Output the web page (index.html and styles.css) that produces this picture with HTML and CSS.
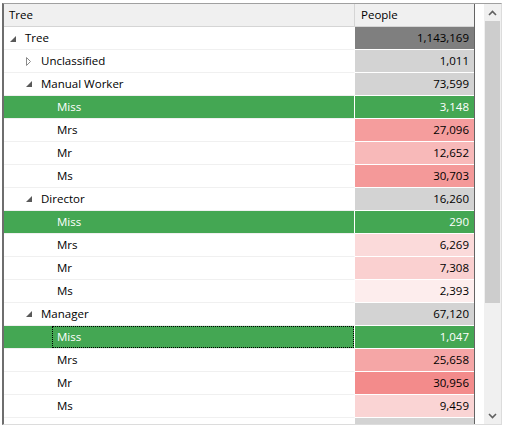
FILE: index.html
```html
<!DOCTYPE html>
<html>
<head>
<meta charset="utf-8">
<link rel="stylesheet" href="styles.css">
</head>
<body>
<div class="frame">
  <div class="grid">
    <div class="header">
      <div class="h-tree">Tree</div>
      <div class="h-val">People</div>
    </div>
    <div class="body">
      <div class="row"><div class="tc l0"><span class="tg"><svg width="6" height="6" viewBox="0 0 6 6"><path d="M0 6 L6 0 L6 6 Z" fill="#595959"/></svg></span><span class="lb">Tree</span></div><div class="vc c-root">1,143,169</div></div>
      <div class="row"><div class="tc l1"><span class="tg"><svg width="5" height="9" viewBox="0 0 5 9"><path d="M0.5 0.5 L4.5 4.5 L0.5 8.5 Z" fill="none" stroke="#8a8a8a"/></svg></span><span class="lb">Unclassified</span></div><div class="vc c-grp">1,011</div></div>
      <div class="row"><div class="tc l1"><span class="tg"><svg width="6" height="6" viewBox="0 0 6 6"><path d="M0 6 L6 0 L6 6 Z" fill="#595959"/></svg></span><span class="lb">Manual Worker</span></div><div class="vc c-grp">73,599</div></div>
      <div class="row sel"><div class="tc l2"><span class="tg"></span><span class="lb">Miss</span></div><div class="vc c-sel">3,148</div></div>
      <div class="row"><div class="tc l2"><span class="tg"></span><span class="lb">Mrs</span></div><div class="vc r-mw-mrs">27,096</div></div>
      <div class="row"><div class="tc l2"><span class="tg"></span><span class="lb">Mr</span></div><div class="vc r-mw-mr">12,652</div></div>
      <div class="row"><div class="tc l2"><span class="tg"></span><span class="lb">Ms</span></div><div class="vc r-mw-ms">30,703</div></div>
      <div class="row"><div class="tc l1"><span class="tg"><svg width="6" height="6" viewBox="0 0 6 6"><path d="M0 6 L6 0 L6 6 Z" fill="#595959"/></svg></span><span class="lb">Director</span></div><div class="vc c-grp">16,260</div></div>
      <div class="row sel"><div class="tc l2"><span class="tg"></span><span class="lb">Miss</span></div><div class="vc c-sel">290</div></div>
      <div class="row"><div class="tc l2"><span class="tg"></span><span class="lb">Mrs</span></div><div class="vc r-d-mrs">6,269</div></div>
      <div class="row"><div class="tc l2"><span class="tg"></span><span class="lb">Mr</span></div><div class="vc r-d-mr">7,308</div></div>
      <div class="row"><div class="tc l2"><span class="tg"></span><span class="lb">Ms</span></div><div class="vc r-d-ms">2,393</div></div>
      <div class="row"><div class="tc l1"><span class="tg"><svg width="6" height="6" viewBox="0 0 6 6"><path d="M0 6 L6 0 L6 6 Z" fill="#595959"/></svg></span><span class="lb">Manager</span></div><div class="vc c-grp">67,120</div></div>
      <div class="row sel"><div class="tc l2"><span class="tg"></span><span class="lb focus">Miss</span></div><div class="vc c-sel">1,047</div></div>
      <div class="row"><div class="tc l2"><span class="tg"></span><span class="lb">Mrs</span></div><div class="vc r-m-mrs">25,658</div></div>
      <div class="row"><div class="tc l2"><span class="tg"></span><span class="lb">Mr</span></div><div class="vc r-m-mr">30,956</div></div>
      <div class="row"><div class="tc l2"><span class="tg"></span><span class="lb">Ms</span></div><div class="vc r-m-ms">9,459</div></div>
      <div class="row"><div class="tc l1"><span class="tg"></span><span class="lb"></span></div><div class="vc c-grp"></div></div>
    </div>
  </div>
  <div class="gap"></div>
  <div class="scroll">
    <div class="sbtn"><svg width="9" height="6" viewBox="0 0 9 6"><path d="M1 5 L4.5 1.5 L8 5" fill="none" stroke="#606060" stroke-width="1.6"/></svg></div>
    <div class="thumb"></div>
    <div class="track"></div>
    <div class="sbtn"><svg width="9" height="6" viewBox="0 0 9 6"><path d="M1 1 L4.5 4.5 L8 1" fill="none" stroke="#606060" stroke-width="1.6"/></svg></div>
  </div>
</div>
</body>
</html>
```
FILE: styles.css
```css
html, body {
  margin: 0;
  padding: 0;
  background: #ffffff;
}
body {
  font-family: "Open Sans", "Noto Sans", sans-serif;
  font-size: 11.5px;
  color: #000;
}
.frame {
  margin: 3px 0 0 2px;
  width: 497px;
  height: 420px;
  display: flex;
  border-top: 1px solid #a0a0a0;
  border-left: 2px solid #6e6e6e;
  border-right: 1px solid #dcdcdc;
  border-bottom: 1px solid #dcdcdc;
}
.grid {
  width: 470px;
  border-right: 1px solid #646464;
  display: flex;
  flex-direction: column;
  overflow: hidden;
}
.header {
  display: flex;
  height: 22px;
  line-height: 22px;
  background: #f0f0f0;
  border-bottom: 1px solid #d5d5d5;
  flex: none;
}
.h-tree {
  width: 345px;
  padding-left: 5px;
  border-right: 1px solid #d5d5d5;
}
.h-val {
  flex: 1;
  padding-left: 6px;
}
.body {
  flex: 1;
  overflow: hidden;
}
.row {
  display: flex;
  height: 23px;
}
.tc {
  display: flex;
  align-items: stretch;
  border-bottom: 1px solid #f0f0f0;
  border-right: 1px solid #ffffff;
  box-sizing: border-box;
  width: 351px;
  height: 23px;
}
.tc.l0 { padding-left: 0; }
.tc.l1 { padding-left: 16px; }
.tc.l2 { padding-left: 32px; }
.tg {
  width: 16px;
  flex: none;
  display: flex;
  align-items: center;
  padding-left: 6px;
  box-sizing: border-box;
}
.tc.l0 .tg svg { margin-top: 1px; }
.lb {
  flex: 1;
  padding-left: 5px;
  line-height: 22px;
  height: 22px;
  box-sizing: border-box;
}
.lb.focus {
  outline: 1px dotted #000;
  outline-offset: -1px;
}
.vc {
  width: 119px;
  height: 23px;
  box-sizing: border-box;
  border-bottom: 1px solid #ffffff;
  text-align: right;
  padding-right: 5px;
  line-height: 22px;
}
.row.sel .tc {
  background: #44a753;
  color: #ffffff;
}
.c-root { background: #7f7f7f; }
.c-grp { background: #d3d3d3; }
.c-sel { background: #44a753; color: #ffffff; }
.r-mw-mrs { background: #f59d9d; }
.r-mw-mr { background: #f8b9b9; }
.r-mw-ms { background: #f49999; }
.r-d-mrs { background: #fbdada; }
.r-d-mr { background: #fad0d0; }
.r-d-ms { background: #fdeded; }
.r-m-mrs { background: #f5a6a6; }
.r-m-mr { background: #f38b8b; }
.r-m-ms { background: #fad4d4; }
.gap {
  width: 9px;
  flex: none;
}
.scroll {
  width: 17px;
  flex: none;
  display: flex;
  flex-direction: column;
  background: #f0f0f0;
}
.sbtn {
  height: 17px;
  display: flex;
  align-items: center;
  justify-content: center;
  flex: none;
}
.thumb {
  height: 282px;
  margin: 0 1px;
  background: #cdcdcd;
  flex: none;
}
.track { flex: 1; }
```
